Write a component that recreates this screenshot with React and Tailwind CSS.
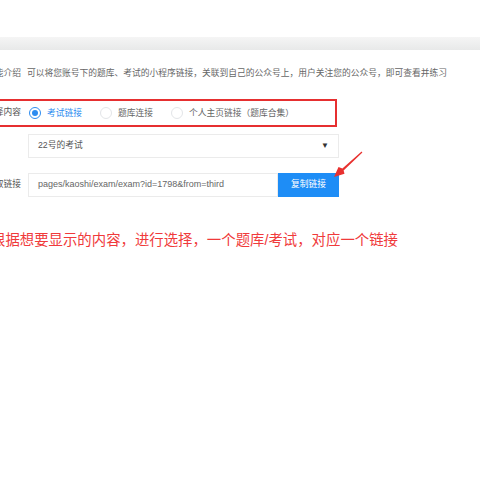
import React, { useState } from "react";

// 公众号关联设置页（截图局部）
const Radio = ({ checked, label, onClick, first }) => (
  <div
    className={`flex items-center cursor-pointer ${first ? "" : "ml-[18px]"}`}
    onClick={onClick}
  >
    <span
      className={`w-[12px] h-[12px] rounded-full border flex items-center justify-center bg-white ${
        checked ? "border-[#2d8cf0]" : "border-[#e3e5e8]"
      }`}
    >
      {checked && <span className="w-[6px] h-[6px] rounded-full bg-[#2d8cf0]" />}
    </span>
    <span
      className={`ml-[6px] text-[8.75px] leading-[12px] ${
        checked ? "text-[#2d8cf0]" : "text-[#666]"
      }`}
    >
      {label}
    </span>
  </div>
);

const App = () => {
  const [choice, setChoice] = useState(1);

  return (
    <div
      className="w-[480px] h-[480px] bg-white relative overflow-hidden"
      style={{ fontFamily: '"Liberation Sans", "Noto Sans CJK SC", sans-serif' }}
    >
      {/* 顶部空白与灰色分隔条 */}
      <div className="h-[37px] bg-white" />
      <div className="h-[13px] bg-gradient-to-b from-[#f5f5f5] to-[#e8e9e9]" />

      <div className="ml-[-22px]">
        {/* 功能介绍 */}
        <div className="mt-[18px] flex items-center h-[12px]">
          <span className="w-[43px] text-right text-[8.75px] text-[#666] whitespace-nowrap">
            功能介绍
          </span>
          <span className="ml-[6px] text-[8.75px] text-[#666] whitespace-nowrap">
            可以将您账号下的题库、考试的小程序链接，关联到自己的公众号上，用户关注您的公众号，即可查看并练习
          </span>
        </div>

        {/* 选择内容（红框） */}
        <div className="mt-[19px] w-[359px] h-[28px] border-2 border-[#e62f30] flex items-center">
          <span className="w-[41px] text-right text-[8.75px] text-[#555] whitespace-nowrap">
            选择内容
          </span>
          <div className="ml-[8px] flex items-center">
            <Radio first checked={choice === 1} label="考试链接" onClick={() => setChoice(1)} />
            <Radio checked={choice === 2} label="题库连接" onClick={() => setChoice(2)} />
            <Radio
              checked={choice === 3}
              label="个人主页链接（题库合集）"
              onClick={() => setChoice(3)}
            />
          </div>
        </div>

        {/* 下拉选择 */}
        <div className="mt-[7px] ml-[50px] w-[311px] h-[24px] border border-[#ebebeb] bg-white flex items-center justify-between px-[9px]">
          <span className="text-[8.75px] text-[#555]">22号的考试</span>
          <span className="text-[8px] text-[#333] leading-none">▼</span>
        </div>

        {/* 获取链接 */}
        <div className="mt-[15px] flex items-center">
          <span className="w-[43px] text-right text-[8.75px] text-[#555] whitespace-nowrap">
            获取链接
          </span>
          <div className="ml-[7px] w-[250px] h-[24px] border border-[#ebebeb] flex items-center px-[9px]">
            <span className="text-[9px] text-[#666] whitespace-nowrap">
              pages/kaoshi/exam/exam?id=1798&amp;from=third
            </span>
          </div>
          <button className="w-[61px] h-[24px] bg-[#1e8df6] text-white text-[8.75px]">
            复制链接
          </button>
        </div>

        {/* 说明文字 */}
        <div className="mt-[33px] ml-[13px] text-[14.4px] leading-[20px] text-[#f03a3b] whitespace-nowrap">
          根据想要显示的内容，进行选择，一个题库/考试，对应一个链接
        </div>
      </div>

      {/* 红色箭头 */}
      <svg
        className="absolute left-[330px] top-[148px]"
        width="36"
        height="32"
        viewBox="0 0 36 32"
      >
        <polygon
          points="32.4,4.5 13.6,22.6 14.5,25.7 4,29 8.5,19 12.4,20.4 31.6,3.5"
          fill="#e8312f"
        />
      </svg>
    </div>
  );
};

export default App;
